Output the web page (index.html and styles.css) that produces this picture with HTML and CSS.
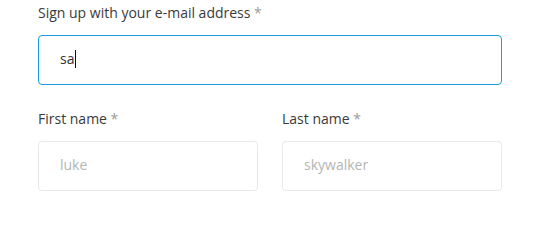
FILE: index.html
```html
<!DOCTYPE html>
<html lang="en">
<head>
<meta charset="utf-8">
<title>Sign up</title>
<link rel="stylesheet" href="styles.css">
</head>
<body>
<form class="signup">
  <div class="field">
    <label class="label">Sign up with your e-mail address <span class="req">*</span></label>
    <div class="input is-focus"><span class="value">sa</span><span class="caret"></span></div>
  </div>
  <div class="row">
    <div class="field">
      <label class="label" for="first">First name <span class="req">*</span></label>
      <input class="input" id="first" type="text" placeholder="luke">
    </div>
    <div class="field">
      <label class="label" for="last">Last name <span class="req">*</span></label>
      <input class="input" id="last" type="text" placeholder="skywalker">
    </div>
  </div>
</form>
</body>
</html>
```
FILE: styles.css
```css
html, body {
  margin: 0;
  padding: 0;
  background: #ffffff;
}
body {
  font-family: "Open Sans", "Noto Sans", sans-serif;
  color: #333333;
}
.signup {
  width: 464px;
  padding: 2px 0 0 38px;
  display: flex;
  flex-direction: column;
  gap: 23px;
}
.field {
  display: flex;
  flex-direction: column;
  gap: 12px;
  flex: 1;
  min-width: 0;
}
.label {
  font-size: 14px;
  line-height: 21px;
  color: #3a3a3a;
}
.req {
  color: #9a9a9a;
}
.row {
  display: flex;
  gap: 24px;
}
.input {
  box-sizing: border-box;
  width: 100%;
  height: 50px;
  margin: 0;
  padding: 0 21px 3px;
  border: 1px solid #e8e8e8;
  border-radius: 4px;
  background: #ffffff;
  font-family: "Open Sans", "Noto Sans", sans-serif;
  font-size: 14px;
  color: #333333;
  outline: none;
  display: flex;
  align-items: center;
}
.input::placeholder {
  color: #b5b5b5;
}
.input.is-focus {
  border-color: #1a9be0;
}
.caret {
  display: inline-block;
  width: 1px;
  height: 18px;
  background: #111111;
  margin-left: 1px;
}
```
